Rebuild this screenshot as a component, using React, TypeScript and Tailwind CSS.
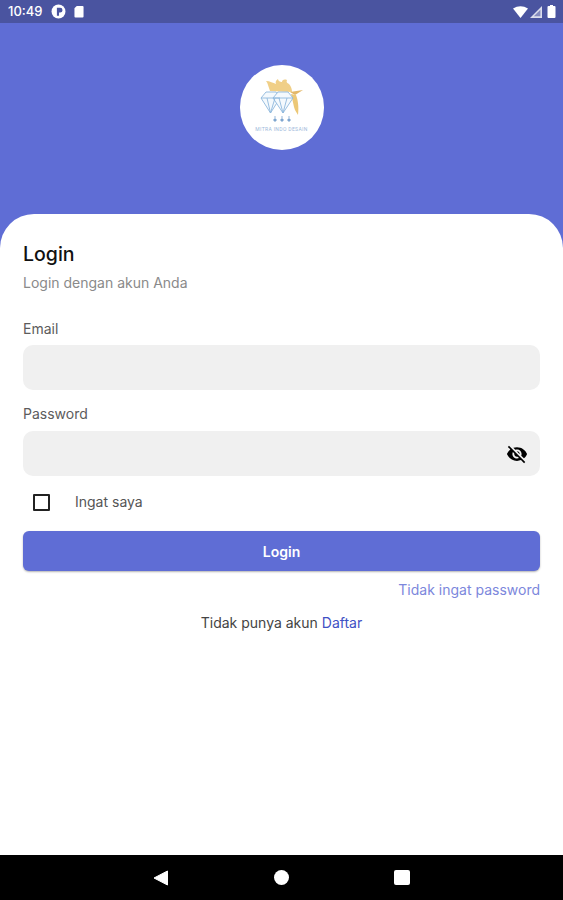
function StatusBar() {
  return (
    <div className="h-[23px] bg-[#4a54a0] flex items-center justify-between pl-2 pr-[7px] text-white shrink-0">
      <div className="flex items-center">
        <span className="text-[13px] font-medium w-[33px] leading-none">10:49</span>
        <svg className="ml-[10px]" width="15" height="15" viewBox="0 0 14 14">
          <circle cx="7" cy="7" r="6.500" fill="#fff" />
          <path d="M5.500 11V3.500h3a2 2 0 0 1 0 4.500H7.500V11z" fill="#4a54a0" />
        </svg>
        <svg className="ml-[8px]" width="10" height="13" viewBox="0 0 11 14">
          <path d="M3 1h6.500A1 1 0 0 1 10.500 2v10.500a1 1 0 0 1-1 1h-8a1 1 0 0 1-1-1V3.500z" fill="#fff" />
        </svg>
      </div>
      <div className="flex items-center">
        <svg width="15" height="12" viewBox="0 0 15 12">
          <path d="M0 2.500Q7.500-2 15 2.500L7.500 12z" fill="#fff" />
        </svg>
        <svg className="ml-[2px]" width="12" height="12" viewBox="0 0 11 11">
          <path d="M11 0v11H0z" fill="#fff" fillOpacity="0.8" />
          <path d="M9.500 3.500v6H3.500z" fill="#4a54a0" fillOpacity="0.6" />
        </svg>
        <svg className="ml-[5px]" width="9" height="13" viewBox="0 0 8 13">
          <path d="M2.500 0h3v1H7a1 1 0 0 1 1 1v10a1 1 0 0 1-1 1H1a1 1 0 0 1-1-1V2a1 1 0 0 1 1-1h1.500z" fill="#fff" />
        </svg>
      </div>
    </div>
  );
}

function Logo() {
  return (
    <div className="w-[84px] h-[85px] rounded-full bg-white relative flex items-center justify-center">
      <svg width="84" height="85" viewBox="0 0 84 85" fill="none">
        {/* rooster crest, swept to the left */}
        <path
          d="M26 16c4 0 7 2 10 3-1-2 0-4 2-5 0 2 2 3 4 3 0-2 2-3 5-2-1 2 0 3 2 4 2 2 3 5 3 8l-22-1c-2-5-2-8-4-10z"
          fill="#f0cf87"
        />
        {/* beak */}
        <path d="M50 27l13-2-8 5z" fill="#e3b869" />
        {/* wattle, hanging down the right side */}
        <path d="M51 29l5 1c2 5 3 12 2 20-1-2-3-4-4-8-1-5-2-9-3-13z" fill="#ecc877" />
        {/* two overlapping diamonds */}
        <g stroke="#8fb8dc" strokeWidth="0.9">
          <path d="M21 33l5-6h10l4 6-9.500 15z" fill="#f4f9fd" />
          <path d="M33 33l5-6h10l5 6-10 15z" fill="#f4f9fd" />
          <path d="M21 33h19M27 33l3.500 15M35 33l-4.500 15M33 33h20M39 33l4 15M47 33l-4 15" />
        </g>
        {/* row of small gems */}
        <path d="M33 55l2-2 2 2-2 2zM40 55l2-2 2 2-2 2zM47 55l2-2 2 2-2 2z" fill="#7fa6cf" />
        <path d="M34 52h2M41 52h2M48 52h2" stroke="#7fa6cf" strokeWidth="0.8" />
      </svg>
      <span className="absolute top-[62px] left-0 right-0 text-center text-[5px] leading-none tracking-[0.35px] text-[#9db8da] font-['Roboto',sans-serif]">
        MITRA INDO DESAIN
      </span>
    </div>
  );
}

function Field({
  label,
  top,
  gap,
  children,
}: {
  label: string;
  top: string;
  gap: string;
  children?: React.ReactNode;
}) {
  return (
    <div className={top}>
      <label className="block text-[14px] leading-[16px] text-[#5c5c5c]">{label}</label>
      <div className={`${gap} h-[45px] rounded-[10px] bg-[#f0f0f0] flex items-center justify-end pr-[12px]`}>
        {children}
      </div>
    </div>
  );
}

export default function App() {
  return (
    <div className="w-[563px] h-[900px] flex flex-col overflow-hidden bg-[#5f6dd5] font-['Inter',sans-serif]">
      <StatusBar />
      {/* header with logo */}
      <div className="h-[191px] shrink-0 flex justify-center pt-[42px]">
        <Logo />
      </div>
      {/* card */}
      <div className="flex-1 bg-white rounded-t-[34px] px-[23px] pt-[28px]">
        <h1 className="text-[19.500px] leading-[24px] font-medium text-[#111]">Login</h1>
        <p className="mt-[9px] text-[14px] leading-[16px] text-[#8a8a8a]">Login dengan akun Anda</p>
        <Field label="Email" top="mt-[30px]" gap="mt-[8px]" />
        <Field label="Password" top="mt-[16px]" gap="mt-[9px]">
          <svg width="22" height="22" viewBox="0 0 24 24" fill="#000">
            <path d="M12 7c2.760 0 5 2.240 5 5 0 .65-.13 1.260-.36 1.830l2.920 2.920c1.510-1.260 2.700-2.890 3.430-4.750-1.730-4.390-6-7.500-11-7.500-1.400 0-2.740.25-3.980.7l2.160 2.160C10.740 7.130 11.350 7 12 7zM2 4.270l2.280 2.280.46.46C3.080 8.300 1.780 10.020 1 12c1.730 4.390 6 7.500 11 7.500 1.550 0 3.030-.3 4.380-.84l.42.42L19.730 22 21 20.730 3.270 3 2 4.270zM7.530 9.800l1.550 1.550c-.05.21-.08.43-.08.65 0 1.660 1.340 3 3 3 .22 0 .44-.03.65-.08l1.550 1.550c-.67.33-1.410.53-2.200.53-2.760 0-5-2.240-5-5 0-.79.2-1.530.53-2.200zm4.310-.78l3.150 3.150.02-.16c0-1.660-1.340-3-3-3l-.17.01z" />
          </svg>
        </Field>
        <div className="mt-[18px] flex items-center h-[16px] pl-[10px]">
          <div className="w-[17px] h-[17px] border-2 border-[#222] rounded-[1px] shrink-0" />
          <span className="ml-[25px] text-[14px] leading-[16px] text-[#555]">Ingat saya</span>
        </div>
        <button className="mt-[21px] w-full h-[40px] rounded-[6px] bg-[#5f6dd5] text-white text-[14px] font-semibold shadow-[0_1px_2px_rgba(0,0,0,0.3)]">
          Login
        </button>
        <div className="mt-[11px] text-right text-[14px] leading-[16px] text-[#7c87dc]">Tidak ingat password</div>
        <div className="mt-[17px] text-center text-[14px] leading-[16px] text-[#444]">
          Tidak punya akun <span className="text-[#3f51c4]">Daftar</span>
        </div>
      </div>
      {/* nav bar */}
      <div className="h-[45px] shrink-0 bg-black flex items-center pl-[153px]">
        <svg width="15" height="16" viewBox="0 0 15 16">
          <path d="M14.500 1v14L1 8z" fill="#fff" stroke="#fff" strokeLinejoin="round" />
        </svg>
        <div className="ml-[106px] w-[15px] h-[15px] rounded-full bg-white" />
        <div className="ml-[105px] w-[16px] h-[15px] rounded-[2px] bg-white" />
      </div>
    </div>
  );
}
